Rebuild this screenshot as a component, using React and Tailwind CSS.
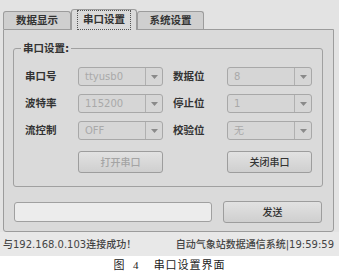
const font = { fontFamily: '"DejaVu Sans", "Noto Sans CJK SC", sans-serif' }

function Combo({ value }) {
  return (
    <div className="w-[85px] h-[19px] flex rounded-[3px] border border-[#a8a8a8] bg-[#d6d6d6] overflow-hidden">
      <div className="flex-1 flex items-center pl-[6px] text-[10px] font-normal text-[#a9a9a9]">{value}</div>
      <div className="w-[17px] border-l border-[#b0b0b0] flex items-center justify-center">
        <svg width="7" height="4" viewBox="0 0 7 4">
          <path d="M0 0 L7 0 L3.5 4 Z" fill="#8a8a8a" />
        </svg>
      </div>
    </div>
  )
}

function Btn({ children, disabled }) {
  return (
    <div
      className={`h-[22px] flex items-center justify-center rounded-[3px] border border-[#9d9d9d] bg-gradient-to-b from-[#e2e2e2] to-[#cfcfcf] text-[10px] font-medium ${
        disabled ? 'text-[#a4a4a4]' : 'text-[#333]'
      }`}
    >
      {children}
    </div>
  )
}

const rows = [
  ['串口号', 'ttyusb0', '数据位', '8'],
  ['波特率', '115200', '停止位', '1'],
  ['流控制', 'OFF', '校验位', '无'],
]

export default function App() {
  return (
    <div className="w-[339px] h-[275px] bg-white flex flex-col" style={font}>
      <div className="h-[256px] bg-[#e3e3e3] flex flex-col">
        <div className="h-[29px] flex items-end pl-[3px] text-[10.5px] text-[#333] font-semibold">
          <div className="w-[68px] h-[18px] flex items-center justify-center border border-b-0 border-[#9c9c9c] rounded-t-[3px] bg-[#cfcfcf]">
            数据显示
          </div>
          <div className="w-[66px] h-[21px] -mb-px flex items-center justify-center border border-b-0 border-[#9c9c9c] rounded-t-[3px] bg-[#dadada] z-10">
            <span className="px-[5px] py-[1px] border border-dotted border-[#555]">串口设置</span>
          </div>
          <div className="w-[67px] h-[18px] flex items-center justify-center border border-b-0 border-[#9c9c9c] rounded-t-[3px] bg-[#cfcfcf]">
            系统设置
          </div>
        </div>
        <div className="ml-[3px] w-[331px] h-[203px] border border-[#9c9c9c] rounded-b-[3px] bg-[#dadada] pl-[9px] pr-[10px] pt-[18px]">
          <div className="relative w-[310px] h-[139px] border border-[#a0a0a0] rounded-[3px] pl-[11px] pt-[18px]">
            <div className="absolute left-[7px] -top-[8px] px-[2px] bg-[#dadada] text-[10.5px] text-[#333] font-semibold leading-[14px]">
              串口设置:
            </div>
            <div className="flex flex-col gap-[8px]">
              {rows.map((r) => (
                <div key={r[0]} className="flex items-center text-[10.5px] text-[#333] font-semibold">
                  <div className="w-[53px]">{r[0]}</div>
                  <Combo value={r[1]} />
                  <div className="w-[54px] ml-[10px]">{r[2]}</div>
                  <Combo value={r[3]} />
                </div>
              ))}
            </div>
            <div className="flex mt-[11px]">
              <div className="ml-[53px] w-[85px]">
                <Btn disabled>打开串口</Btn>
              </div>
              <div className="ml-[64px] w-[85px]">
                <Btn>关闭串口</Btn>
              </div>
            </div>
          </div>
          <div className="flex items-center mt-[14px]">
            <div className="ml-[1px] w-[198px] h-[20px] border border-[#a0a0a0] rounded-[3px] bg-[#ececec]" />
            <div className="ml-[11px] w-[99px]">
              <Btn>发送</Btn>
            </div>
          </div>
        </div>
        <div className="flex-1 flex items-center justify-between pl-[3px] pr-[5px] text-[10px] text-[#444] font-medium bg-[#e8e8e8]">
          <span>与192.168.0.103连接成功！</span>
          <span>自动气象站数据通信系统|19:59:59</span>
        </div>
      </div>
      <div className="flex-1 flex items-center justify-center text-[11px] text-[#222]" style={{ fontFamily: '"Liberation Serif", "Noto Sans CJK SC", serif' }}>
        <span className="tracking-[3px]">图 4</span>
        <span className="ml-[12px] tracking-[1px]">串口设置界面</span>
      </div>
    </div>
  )
}
